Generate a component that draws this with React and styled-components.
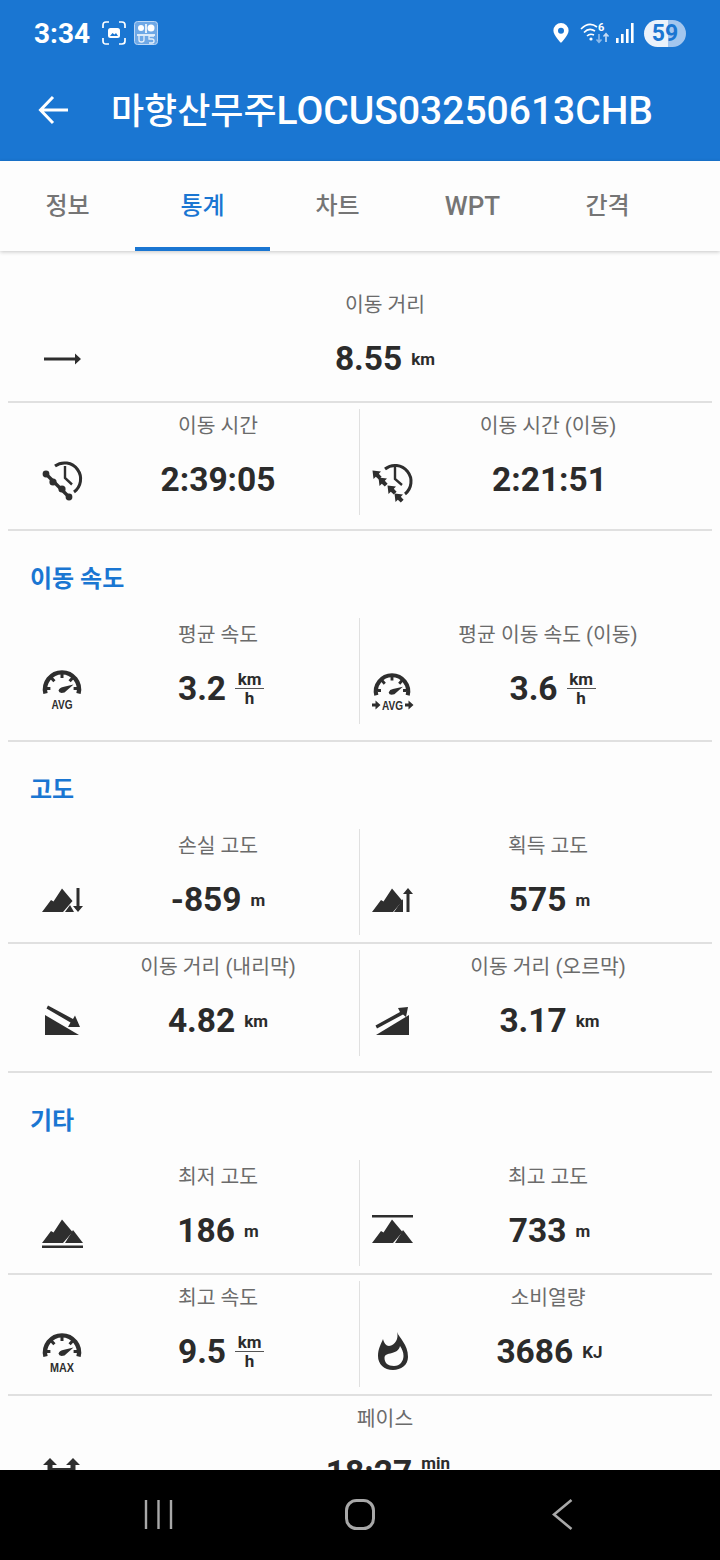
import React from "react";
import styled, { createGlobalStyle } from "styled-components";

const BLUE = "#1a76d2";
const INK = "#2b2b2b";
const FONT = `Roboto, "Noto Sans CJK KR", sans-serif`;

const Global = createGlobalStyle`
  html, body { margin: 0; padding: 0; background: #000; }
  * { box-sizing: border-box; }
`;

const Screen = styled.div`
  width: 720px;
  height: 1560px;
  display: flex;
  flex-direction: column;
  overflow: hidden;
  font-family: ${FONT};
  background: #fdfdfd;
`;

const Header = styled.header`
  background: ${BLUE};
  color: #fff;
  flex: none;
`;

const StatusBar = styled.div`
  height: 66px;
  display: flex;
  align-items: center;
  justify-content: space-between;
  padding: 0 34px;
`;

const StatusGroup = styled.div`
  display: flex;
  align-items: center;
  gap: ${(p) => p.$gap || 8}px;
`;

const StatusIcon = styled.svg`
  display: block;
  margin-right: ${(p) => p.$mr || 0}px;
`;

const Time = styled.span`
  font-size: 28px;
  font-weight: 700;
  margin-right: 4px;
`;

const Battery = styled.span`
  width: 42px;
  height: 27px;
  border-radius: 14px;
  background: linear-gradient(90deg, #eaf2fb 0 57%, #a3c6ee 57% 100%);
  color: ${BLUE};
  font-size: 23px;
  font-weight: 700;
  display: flex;
  align-items: center;
  justify-content: center;
`;

const AppBar = styled.div`
  height: 95px;
  display: flex;
  align-items: center;
  padding: 0 0 7px 38px;
`;

const BackButton = styled.svg`
  width: 30px;
  height: 30px;
  margin-right: 43px;
`;

const Title = styled.h1`
  margin: -5px 0 0;
  font-size: 39px;
  font-weight: 500;
  white-space: nowrap;
`;

const TitleHangul = styled.span`
  font-size: 36px;
`;

const TabBar = styled.nav`
  flex: none;
  height: 90px;
  display: flex;
  background: #fdfdfd;
  box-shadow: 0 1px 4px rgba(0, 0, 0, 0.22);
  position: relative;
  z-index: 1;
`;

const Tab = styled.div`
  width: 135px;
  display: flex;
  align-items: center;
  justify-content: center;
  font-size: ${(p) => (p.$latin ? 26 : 24)}px;
  font-weight: 500;
  padding-top: ${(p) => (p.$latin ? 6 : 0)}px;
  padding-bottom: 2px;
  color: ${(p) => (p.$active ? BLUE : "#757575")};
  border-bottom: 4px solid ${(p) => (p.$active ? BLUE : "transparent")};
`;

const Body = styled.main`
  flex: 1;
  min-height: 0;
  overflow: hidden;
  padding: 37px 8px 0;
`;

const Row = styled.div`
  display: flex;
  height: 106px;
  margin-bottom: ${(p) => p.$below || 7}px;
`;

const Rule = styled.div`
  height: 2px;
  margin-bottom: ${(p) => (p.$tight ? 6 : 0)}px;
  background: #e0e0e0;
`;

const SectionTitle = styled.h2`
  margin: 0;
  height: 87px;
  padding: 31px 0 0 22px;
  font-size: 24px;
  line-height: 34px;
  font-weight: 700;
  color: ${BLUE};
`;

const Cell = styled.div`
  display: grid;
  grid-template-columns: 40px 1fr;
  grid-template-rows: 30px 81px;
  align-items: center;
  ${(p) => p.$side === "left" && `width: 351px; padding: 0 5px 0 34px;`}
  ${(p) =>
    p.$side === "right" &&
    `width: 353px; padding: 0 28px 0 12px; border-left: 1px solid #e0e0e0;`}
  ${(p) => p.$side === "full" && `width: 704px; padding: 0 24px 0 34px;`}
`;

const Label = styled.div`
  grid-column: 2;
  grid-row: 1;
  text-align: center;
  font-size: 20.4px;
  color: #6b6b6b;
  white-space: nowrap;
`;

const IconSlot = styled.div`
  grid-column: 1;
  grid-row: 2;
  height: 40px;
  color: #2e2e2e;
`;

const Glyph = styled.svg`
  display: block;
  width: 40px;
  height: 40px;
  overflow: visible;
`;

const Value = styled.div`
  grid-column: 2;
  grid-row: 2;
  display: flex;
  align-items: center;
  justify-content: center;
  gap: 9px;
  color: ${INK};
  margin-left: ${(p) => (p.$side === "right" ? 3 : 0)}px;
`;

const Number = styled.span`
  font-size: 33.5px;
  font-weight: 700;
`;

const Unit = styled.span`
  font-size: 17px;
  font-weight: 700;
`;

const Fraction = styled.span`
  display: flex;
  flex-direction: column;
  align-items: center;
  font-size: 17px;
  font-weight: 700;
  line-height: 18px;
  margin-right: -6px;
  span:first-child {
    border-bottom: 1.5px solid #555;
    width: 29px;
    text-align: center;
  }
`;

const NavBar = styled.footer`
  flex: none;
  height: 90px;
  background: #000;
  display: flex;
  align-items: flex-start;
  padding-top: 29px;
`;

const NavSlot = styled.div`
  width: ${(p) => p.$w}px;
  height: 32px;
  color: #a8a8a8;
`;

const TextIcon = styled.text`
  font-family: "Liberation Sans", sans-serif;
  font-weight: 700;
  font-size: ${(p) => p.$size || 13.5}px;
  fill: currentColor;
`;

const Mountains = () => (
  <path d="M0 32 L9 20 L11.5 21.5 L20 8.5 L30.5 21 L21 32 Z" fill="currentColor" />
);

const Gauge = () => (
  <>
    <path d="M3.5 24.5 A17 17 0 1 1 36.5 24.5" fill="none" stroke="currentColor" strokeWidth="4.4" />
    <path d="M20 3v6M9 8.5l3.4 3.8M31 8.5l-3.4 3.8M5 19.5h3.4M35 19.5h-3.4" stroke="currentColor" strokeWidth="3" />
    <path d="M31.5 15.5 L22.5 23.5 Q17 25 16.5 21.5 Q17.5 18.5 21 18 Z" fill="currentColor" />
  </>
);

const TinyArrow = ({ x, y }) => (
  <path transform={`translate(${x} ${y})`} d="M-4.5-4.5 L4-3.5 L1.8-1.2 L4.6 1.8 L1.8 4.6 L-1.2 1.8 L-3.5 4 Z" fill="currentColor" />
);

const icons = {
  arrow: <path d="M2 18.5h31v-4l6 5.5-6 5.5v-4H2z" fill="currentColor" />,
  clockChain: (
    <>
      <path d="M13 6 A16 16 0 1 1 32 32" fill="none" stroke="currentColor" strokeWidth="3" />
      <path d="M23 6v12l7 6.5" fill="none" stroke="currentColor" strokeWidth="2.4" />
      <path d="M4 14L27 37" stroke="currentColor" strokeWidth="3.4" />
      <circle cx="4" cy="14" r="3.4" fill="currentColor" />
      <circle cx="11" cy="22" r="3.6" fill="currentColor" />
      <circle cx="20" cy="29" r="3.6" fill="currentColor" />
      <circle cx="27" cy="37" r="3.4" fill="currentColor" />
    </>
  ),
  clockMove: (
    <>
      <path d="M13 9 A16 16 0 1 1 33 34" fill="none" stroke="currentColor" strokeWidth="3" />
      <path d="M23 7v12l7 6" fill="none" stroke="currentColor" strokeWidth="2.4" />
      <TinyArrow x={5} y={15} />
      <TinyArrow x={11} y={22} />
      <TinyArrow x={20} y={30} />
      <TinyArrow x={27} y={38} />
    </>
  ),
  gaugeAvg: (
    <>
      <Gauge />
      <TextIcon x="20" y="40" textAnchor="middle" textLength="21" lengthAdjust="spacingAndGlyphs">AVG</TextIcon>
    </>
  ),
  gaugeMove: (
    <>
      <g transform="translate(1 3) scale(0.95)">
        <Gauge />
      </g>
      <TextIcon x="20.5" y="41" textAnchor="middle" textLength="21" lengthAdjust="spacingAndGlyphs">AVG</TextIcon>
      <path d="M0 34.5h3.5v-3l5 4.5-5 4.5v-3H0zM33 34.5h3.5v-3l5 4.5-5 4.5v-3H33z" fill="currentColor" />
    </>
  ),
  gaugeMax: (
    <>
      <Gauge />
      <TextIcon x="20" y="40" textAnchor="middle" textLength="24" lengthAdjust="spacingAndGlyphs">MAX</TextIcon>
    </>
  ),
  descent: (
    <>
      <Mountains />
      <path d="M23 32 L28 25 L32 32 Z" fill="currentColor" />
      <path d="M34.5 8h3v18h3.5L36 32l-5-6h3.5z" fill="currentColor" />
    </>
  ),
  ascent: (
    <>
      <Mountains />
      <path d="M22 32 L31 19 V32 Z" fill="currentColor" />
      <path d="M34.5 32V14H31l5-6 5 6h-3.5v18z" fill="currentColor" />
    </>
  ),
  slopeDown: (
    <>
      <path d="M3 14 L37 34 H3 Z" fill="currentColor" />
      <path d="M4.5 7.5 L6 4.5 L31 18 L33 14.5 L38 26 L26 26 L28.5 21.5 Z" fill="currentColor" />
    </>
  ),
  slopeUp: (
    <>
      <path d="M4 34 L37 14 V34 Z" fill="currentColor" />
      <path d="M3.5 24.5 L28 11 L26 7 L36 6 L34 16 L31 13.5 L5 27.5 Z" fill="currentColor" />
    </>
  ),
  low: (
    <>
      <Mountains />
      <path d="M23 32 L31 19 L41 32 Z" fill="currentColor" />
      <path d="M0 34.5h41v2.4H0z" fill="currentColor" />
    </>
  ),
  high: (
    <>
      <Mountains />
      <path d="M23 32 L31 19 L41 32 Z" fill="currentColor" />
      <path d="M0 4h41v2.4H0z" fill="currentColor" />
    </>
  ),
  flame: (
    <path
      fillRule="evenodd"
      fill="currentColor"
      d="M25 0 C27 6 36 12 36 25 C36 33 29 38 21 38 C12 38 6 32 6 24 C6 17 9 12 11 7 C12 11 14 14 17 14 C23 13 27 7 25 0 Z M12.5 26 C12.5 31 16 34 22 34 C28 34 31.5 29 31.5 24 C31.5 20 30 17 28 14 C27 18 24 20 20 21 C15 22 12.5 23 12.5 26 Z"
    />
  ),
  pace: (
    <>
      <path d="M1 12 L8 5 L15 12 H10.5 V32 H5.5 V12 Z" fill="currentColor" />
      <path d="M24 12 L31 5 L38 12 H33.5 V32 H28.5 V12 Z" fill="currentColor" />
      <path d="M10 15h19v2.5H10z" fill="currentColor" />
    </>
  ),
};

const Stat = ({ side, label, value, unit, frac, icon }) => (
  <Cell $side={side}>
    <Label>{label}</Label>
    <IconSlot>
      <Glyph viewBox="0 0 40 40">{icons[icon]}</Glyph>
    </IconSlot>
    <Value $side={side}>
      <Number>{value}</Number>
      {unit && <Unit>{unit}</Unit>}
      {frac && (
        <Fraction>
          <span>{frac[0]}</span>
          <span>{frac[1]}</span>
        </Fraction>
      )}
    </Value>
  </Cell>
);

const KMH = ["km", "h"];

function App() {
  const tabs = ["정보", "통계", "차트", "WPT", "간격"];
  return (
    <>
      <Global />
      <Screen>
        <Header>
          <StatusBar>
            <StatusGroup>
              <Time>3:34</Time>
              <StatusIcon width="24" height="24" viewBox="0 0 24 24" fill="none" stroke="#fff" strokeWidth="1.7">
                <path d="M1 7V4q0-3 3-3h3M17 1h3q3 0 3 3v3M23 17v3q0 3-3 3h-3M7 23H4q-3 0-3-3v-3" />
                <rect x="6" y="7" width="12" height="10" rx="2.5" fill="#fff" stroke="none" />
                <path d="M8 15l2.5-3 2 1.5 1.5-1.5 2 3z" fill={BLUE} stroke="none" />
              </StatusIcon>
              <StatusIcon width="24" height="24" viewBox="0 0 24 24" fill="none">
                <rect x="0.5" y="0.5" width="23" height="23" rx="3" fill="#6ea8e6" stroke="#bcd7f5" />
                <circle cx="7" cy="7" r="3" fill="#fff" />
                <circle cx="17" cy="7" r="3.5" fill="#fff" />
                <path d="M3 14h18M12 3v9" stroke="#fff" strokeWidth="1.6" />
                <path d="M5 14v5q0 2 2.5 2t2.5-2v-4M15 15h5M15 15v3h3q2 0 2 2t-2 2h-3" stroke="#e3effb" strokeWidth="1.3" />
              </StatusIcon>
            </StatusGroup>
            <StatusGroup $gap={6}>
              <StatusIcon $mr={5} width="16" height="20" viewBox="0 0 16 20">
                <path fillRule="evenodd" d="M8 0a7.6 7.6 0 0 1 7.6 7.6C15.6 12.5 8 20 8 20S.4 12.5.4 7.6A7.6 7.6 0 0 1 8 0zm0 4.7a3 3 0 1 0 0 6 3 3 0 0 0 0-6z" fill="#fff" />
              </StatusIcon>
              <StatusIcon $mr={-4} width="34" height="22" viewBox="0 0 34 22" fill="none" stroke="#fff" strokeWidth="1.6">
                <path d="M1 7Q9-1 17 5M4 10.5Q9 5 15 9M7 14q3-3 7-1" />
                <circle cx="11" cy="17" r="1.6" fill="#fff" stroke="none" />
                <text x="18" y="9" fontSize="11" fontWeight="700" fontFamily="Roboto, sans-serif" fill="#fff" stroke="none">6</text>
                <path d="M19 12v8M16.5 17.5l2.5 2.7 2.5-2.7" stroke="#8dbbec" />
                <path d="M26 20v-8M23.5 14.5l2.5-2.7 2.5 2.7" stroke="#c5dcf5" />
              </StatusIcon>
              <StatusIcon $mr={4} width="18" height="20" viewBox="0 0 18 20" fill="#fff">
                <rect x="0" y="15" width="2.6" height="5" />
                <rect x="5" y="11" width="2.6" height="9" />
                <rect x="10" y="6" width="2.6" height="14" />
                <rect x="15" y="0" width="2.6" height="20" />
              </StatusIcon>
              <Battery>59</Battery>
            </StatusGroup>
          </StatusBar>
          <AppBar>
            <BackButton viewBox="0 0 30 30" fill="none" stroke="#fff" strokeWidth="3">
              <path d="M30 15H3M15 2 2.5 15 15 28" />
            </BackButton>
            <Title><TitleHangul>마향산무주</TitleHangul>LOCUS03250613CHB</Title>
          </AppBar>
        </Header>

        <TabBar>
          {tabs.map((t) => (
            <Tab key={t} $active={t === "통계"} $latin={t === "WPT"}>{t}</Tab>
          ))}
        </TabBar>

        <Body>
          <Row>
            <Stat side="full" label="이동 거리" value="8.55" unit="km" icon="arrow" />
          </Row>
          <Rule $tight />
          <Row $below={14}>
            <Stat side="left" label="이동 시간" value="2:39:05" icon="clockChain" />
            <Stat side="right" label="이동 시간 (이동)" value="2:21:51" icon="clockMove" />
          </Row>
          <Rule />

          <SectionTitle>이동 속도</SectionTitle>
          <Row $below={16}>
            <Stat side="left" label="평균 속도" value="3.2" frac={KMH} icon="gaugeAvg" />
            <Stat side="right" label="평균 이동 속도 (이동)" value="3.6" frac={KMH} icon="gaugeMove" />
          </Row>
          <Rule />

          <SectionTitle>고도</SectionTitle>
          <Row>
            <Stat side="left" label="손실 고도" value="-859" unit="m" icon="descent" />
            <Stat side="right" label="획득 고도" value="575" unit="m" icon="ascent" />
          </Row>
          <Rule $tight />
          <Row $below={15}>
            <Stat side="left" label="이동 거리 (내리막)" value="4.82" unit="km" icon="slopeDown" />
            <Stat side="right" label="이동 거리 (오르막)" value="3.17" unit="km" icon="slopeUp" />
          </Row>
          <Rule />

          <SectionTitle>기타</SectionTitle>
          <Row>
            <Stat side="left" label="최저 고도" value="186" unit="m" icon="low" />
            <Stat side="right" label="최고 고도" value="733" unit="m" icon="high" />
          </Row>
          <Rule $tight />
          <Row>
            <Stat side="left" label="최고 속도" value="9.5" frac={KMH} icon="gaugeMax" />
            <Stat side="right" label="소비열량" value="3686" unit="KJ" icon="flame" />
          </Row>
          <Rule $tight />
          <Row>
            <Stat side="full" label="페이스" value="18:27" frac={["min", "km"]} icon="pace" />
          </Row>
        </Body>

        <NavBar>
          <NavSlot $w={144} />
          <NavSlot $w={201}>
            <svg width="30" height="32" viewBox="0 0 30 32" fill="none" stroke="currentColor" strokeWidth="2.4">
              <path d="M2 1v29M14.5 1v29M27 1v29" />
            </svg>
          </NavSlot>
          <NavSlot $w={207}>
            <svg width="30" height="32" viewBox="0 0 30 32" fill="none" stroke="currentColor" strokeWidth="3">
              <rect x="1.5" y="1.5" width="27" height="28" rx="10" />
            </svg>
          </NavSlot>
          <NavSlot $w={24}>
            <svg width="22" height="32" viewBox="0 0 22 32" fill="none" stroke="currentColor" strokeWidth="2.6">
              <path d="M19.5 1 2 15.5 19.5 30" />
            </svg>
          </NavSlot>
        </NavBar>
      </Screen>
    </>
  );
}

export default App;
